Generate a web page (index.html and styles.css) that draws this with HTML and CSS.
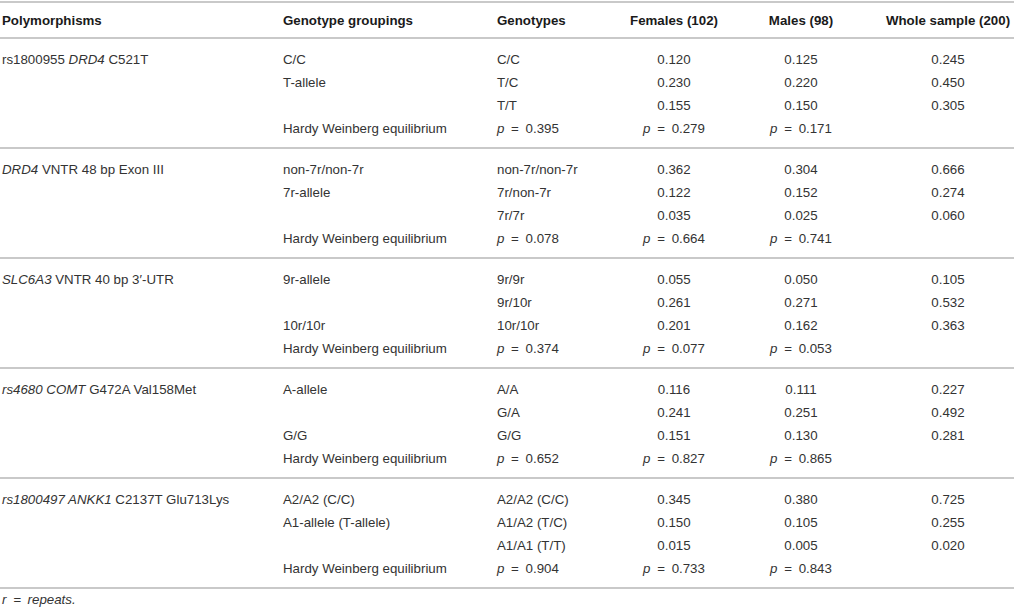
FILE: index.html
```html
<!DOCTYPE html>
<html lang="en">
<head>
  <meta charset="UTF-8">
  <meta name="viewport" content="width=device-width, initial-scale=1.0">
  <title>Genotype frequencies</title>
  <link rel="stylesheet" href="styles.css">
</head>
<body>
  <table class="geno-table">
    <colgroup>
      <col class="c-poly">
      <col class="c-group">
      <col class="c-geno">
      <col class="c-fem">
      <col class="c-male">
      <col class="c-whole">
    </colgroup>
    <thead>
      <tr>
        <th>Polymorphisms</th>
        <th>Genotype groupings</th>
        <th>Genotypes</th>
        <th class="num">Females (102)</th>
        <th class="num">Males (98)</th>
        <th class="num">Whole sample (200)</th>
      </tr>
    </thead>
    <tbody>
      <tr>
        <td>rs1800955 <i>DRD4</i> C521T</td>
        <td>C/C</td>
        <td>C/C</td>
        <td class="num">0.120</td>
        <td class="num">0.125</td>
        <td class="num">0.245</td>
      </tr>
      <tr>
        <td></td>
        <td>T-allele</td>
        <td>T/C</td>
        <td class="num">0.230</td>
        <td class="num">0.220</td>
        <td class="num">0.450</td>
      </tr>
      <tr>
        <td></td>
        <td></td>
        <td>T/T</td>
        <td class="num">0.155</td>
        <td class="num">0.150</td>
        <td class="num">0.305</td>
      </tr>
      <tr>
        <td></td>
        <td>Hardy Weinberg equilibrium</td>
        <td><i>p</i> <span class="eq">=</span> 0.395</td>
        <td class="num"><i>p</i> <span class="eq">=</span> 0.279</td>
        <td class="num"><i>p</i> <span class="eq">=</span> 0.171</td>
        <td></td>
      </tr>
    </tbody>
    <tbody>
      <tr>
        <td><i>DRD4</i> VNTR 48 bp Exon III</td>
        <td>non-7r/non-7r</td>
        <td>non-7r/non-7r</td>
        <td class="num">0.362</td>
        <td class="num">0.304</td>
        <td class="num">0.666</td>
      </tr>
      <tr>
        <td></td>
        <td>7r-allele</td>
        <td>7r/non-7r</td>
        <td class="num">0.122</td>
        <td class="num">0.152</td>
        <td class="num">0.274</td>
      </tr>
      <tr>
        <td></td>
        <td></td>
        <td>7r/7r</td>
        <td class="num">0.035</td>
        <td class="num">0.025</td>
        <td class="num">0.060</td>
      </tr>
      <tr>
        <td></td>
        <td>Hardy Weinberg equilibrium</td>
        <td><i>p</i> <span class="eq">=</span> 0.078</td>
        <td class="num"><i>p</i> <span class="eq">=</span> 0.664</td>
        <td class="num"><i>p</i> <span class="eq">=</span> 0.741</td>
        <td></td>
      </tr>
    </tbody>
    <tbody>
      <tr>
        <td><i>SLC6A3</i> VNTR 40 bp 3′-UTR</td>
        <td>9r-allele</td>
        <td>9r/9r</td>
        <td class="num">0.055</td>
        <td class="num">0.050</td>
        <td class="num">0.105</td>
      </tr>
      <tr>
        <td></td>
        <td></td>
        <td>9r/10r</td>
        <td class="num">0.261</td>
        <td class="num">0.271</td>
        <td class="num">0.532</td>
      </tr>
      <tr>
        <td></td>
        <td>10r/10r</td>
        <td>10r/10r</td>
        <td class="num">0.201</td>
        <td class="num">0.162</td>
        <td class="num">0.363</td>
      </tr>
      <tr>
        <td></td>
        <td>Hardy Weinberg equilibrium</td>
        <td><i>p</i> <span class="eq">=</span> 0.374</td>
        <td class="num"><i>p</i> <span class="eq">=</span> 0.077</td>
        <td class="num"><i>p</i> <span class="eq">=</span> 0.053</td>
        <td></td>
      </tr>
    </tbody>
    <tbody>
      <tr>
        <td><i>rs4680 COMT</i> G472A Val158Met</td>
        <td>A-allele</td>
        <td>A/A</td>
        <td class="num">0.116</td>
        <td class="num">0.111</td>
        <td class="num">0.227</td>
      </tr>
      <tr>
        <td></td>
        <td></td>
        <td>G/A</td>
        <td class="num">0.241</td>
        <td class="num">0.251</td>
        <td class="num">0.492</td>
      </tr>
      <tr>
        <td></td>
        <td>G/G</td>
        <td>G/G</td>
        <td class="num">0.151</td>
        <td class="num">0.130</td>
        <td class="num">0.281</td>
      </tr>
      <tr>
        <td></td>
        <td>Hardy Weinberg equilibrium</td>
        <td><i>p</i> <span class="eq">=</span> 0.652</td>
        <td class="num"><i>p</i> <span class="eq">=</span> 0.827</td>
        <td class="num"><i>p</i> <span class="eq">=</span> 0.865</td>
        <td></td>
      </tr>
    </tbody>
    <tbody>
      <tr>
        <td><i>rs1800497 ANKK1</i> C2137T Glu713Lys</td>
        <td>A2/A2 (C/C)</td>
        <td>A2/A2 (C/C)</td>
        <td class="num">0.345</td>
        <td class="num">0.380</td>
        <td class="num">0.725</td>
      </tr>
      <tr>
        <td></td>
        <td>A1-allele (T-allele)</td>
        <td>A1/A2 (T/C)</td>
        <td class="num">0.150</td>
        <td class="num">0.105</td>
        <td class="num">0.255</td>
      </tr>
      <tr>
        <td></td>
        <td></td>
        <td>A1/A1 (T/T)</td>
        <td class="num">0.015</td>
        <td class="num">0.005</td>
        <td class="num">0.020</td>
      </tr>
      <tr>
        <td></td>
        <td>Hardy Weinberg equilibrium</td>
        <td><i>p</i> <span class="eq">=</span> 0.904</td>
        <td class="num"><i>p</i> <span class="eq">=</span> 0.733</td>
        <td class="num"><i>p</i> <span class="eq">=</span> 0.843</td>
        <td></td>
      </tr>
    </tbody>
  </table>
  <p class="footnote"><i>r <span class="eq">=</span> repeats.</i></p>
</body>
</html>
```

FILE: styles.css
```css
body {
  font-family: "Liberation Sans", Arial, Helvetica, sans-serif;
  font-size: 13.3px;
  color: #333;
  background-color: #fff;
  margin: 0;
  padding: 0;
}
.geno-table {
  width: 1014px;
  margin-top: 1px;
  border-collapse: collapse;
  table-layout: fixed;
}
.c-poly { width: 281px; }
.c-group { width: 214px; }
.c-geno { width: 133px; }
.c-fem { width: 92px; }
.c-male { width: 162px; }
.c-whole { width: 132px; }
th,
td {
  padding: 0 2px;
  text-align: left;
  white-space: nowrap;
  vertical-align: middle;
}
thead th {
  height: 34px;
  font-weight: bold;
  color: #1a1a1a;
  border-top: 2px solid #c9c9c9;
  border-bottom: 2px solid #c9c9c9;
}
tbody {
  border-bottom: 2px solid #c9c9c9;
}
tbody td {
  height: 23px;
  line-height: 23px;
}
tbody tr:first-child td {
  padding-top: 9px;
}
tbody tr:last-child td {
  padding-bottom: 7px;
}
.num {
  text-align: center;
}
.eq {
  margin: 0 3px;
}
.footnote {
  margin: 0;
  padding: 4px 2px 0;
  line-height: 14px;
}
```
